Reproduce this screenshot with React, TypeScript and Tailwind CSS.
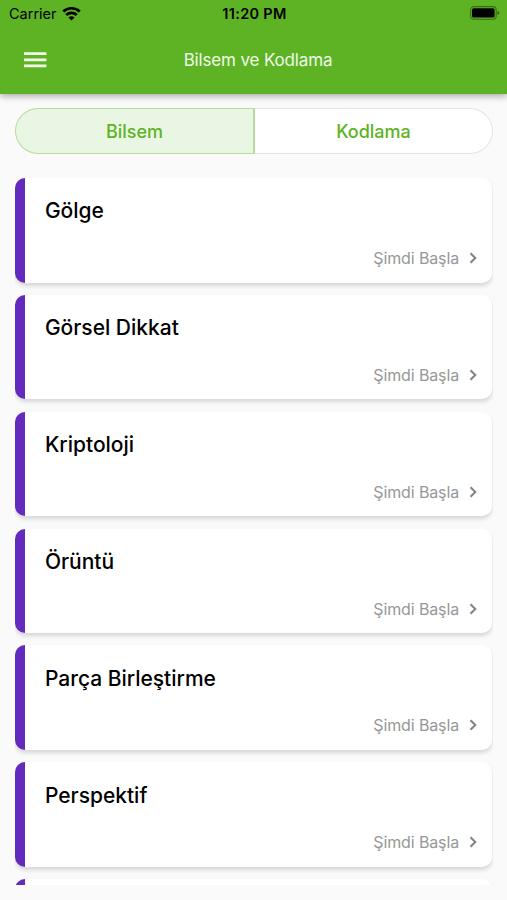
import { useState } from "react"
import clsx from "clsx"

const tabs = ["Bilsem", "Kodlama"]

const lessons = [
  "Gölge",
  "Görsel Dikkat",
  "Kriptoloji",
  "Örüntü",
  "Parça Birleştirme",
  "Perspektif",
]

function WifiIcon() {
  return (
    <svg width="19" height="15" viewBox="0 0 19 15" fill="none" stroke="#000" strokeWidth="2.7">
      <path d="M1.2 5.6C5.9 1.1 13.1 1.1 17.8 5.6" />
      <path d="M4.2 8.9C7.2 6.1 11.8 6.1 14.8 8.9" />
      <path d="M9.5 14.4L6.5 11.4C8.2 9.9 10.8 9.9 12.5 11.4Z" fill="#000" stroke="none" />
    </svg>
  )
}

function BatteryIcon() {
  return (
    <svg width="30" height="14" viewBox="0 0 30 14" fill="none">
      <rect x="0.6" y="0.6" width="25.6" height="12.6" rx="3.2" stroke="#000" strokeOpacity="0.4" strokeWidth="1.1" />
      <rect x="2" y="2.2" width="22.6" height="9.4" rx="1.6" fill="#000" />
      <path d="M27.5 4.8C29.8 5.6 29.8 8.2 27.5 9Z" fill="#000" fillOpacity="0.45" />
    </svg>
  )
}

function MenuIcon() {
  return (
    <svg width="30" height="30" viewBox="0 0 30 30" stroke="#f3fbed" strokeWidth="2.7">
      <path d="M4 8.7H26.4M4 14.8H26.4M4 20.9H26.4" />
    </svg>
  )
}

function ChevronIcon() {
  return (
    <svg className="ml-[3px]" width="22" height="22" viewBox="0 0 22 22" fill="none" stroke="#858585" strokeWidth="2.1">
      <path d="M8.5 6.2L13.3 11L8.5 15.8" />
    </svg>
  )
}

function StatusBar() {
  return (
    <div className="grid h-[27px] grid-cols-3 items-center pl-[9px] pr-[7px] text-black">
      <div className="flex items-center gap-[5px]">
        <span className="pt-px text-[14.5px] leading-none">Carrier</span>
        <WifiIcon />
      </div>
      <span className="pt-px text-center text-[14.5px] font-semibold leading-none tracking-[0.3px]">11:20 PM</span>
      <div className="-mt-px flex justify-end">
        <BatteryIcon />
      </div>
    </div>
  )
}

function LessonCard({ title }: { title?: string }) {
  return (
    <div className="flex h-[104.5px] shrink-0 flex-col justify-between rounded-[10px] border-l-[10px] border-[#632abd] bg-white pb-[13.5px] pl-[19.5px] pr-[8px] pt-[18.3px] shadow-[0_3px_4px_rgba(0,0,0,0.14)]">
      {title && (
        <>
          <h2 className="text-[21px] font-medium leading-[30px] tracking-[-0.01px] text-black">{title}</h2>
          <button className="flex items-center self-end text-[16px] leading-[22px] tracking-[-0.13px] text-[#979797]">
            Şimdi Başla
            <ChevronIcon />
          </button>
        </>
      )}
    </div>
  )
}

export default function App() {
  const [active, setActive] = useState("Bilsem")

  return (
    <div className="flex h-[900px] w-full flex-col overflow-hidden bg-[#fafafa] font-['Inter',sans-serif]">
      <header className="relative h-[94px] shrink-0 bg-[#5db324] shadow-[0_2px_7px_rgba(0,0,0,0.35)]">
        <StatusBar />
        <div className="grid h-[65px] grid-cols-[60px_1fr_60px] items-center pl-[20px] pr-[11px]">
          <button aria-label="Menu">
            <MenuIcon />
          </button>
          <h1 className="text-center text-[17px] leading-6 tracking-[-0.15px] text-[#effae8]">Bilsem ve Kodlama</h1>
        </div>
      </header>

      <div className="ml-[15px] mr-[14px] mt-[14px] flex h-[46px] shrink-0">
        {tabs.map((tab) => (
          <button
            key={tab}
            onClick={() => setActive(tab)}
            className={clsx(
              "flex-1 border text-[18px] font-medium text-[#5db324] first:rounded-l-full last:rounded-r-full",
              active === tab
                ? "border-[#b5dc9d] bg-[#eaf6e4] first:border-r-2"
                : "border-[#e3e3e3] bg-white first:border-r-0 last:border-l-0"
            )}
          >
            {tab}
          </button>
        ))}
      </div>

      <main className="mb-[15px] ml-[15px] mr-[14px] mt-[16px] flex min-h-0 flex-1 flex-col gap-[12.35px] overflow-hidden pl-[0.4px] pr-px pt-[8px]">
        {lessons.map((title) => (
          <LessonCard key={title} title={title} />
        ))}
        <LessonCard />
      </main>
    </div>
  )
}
